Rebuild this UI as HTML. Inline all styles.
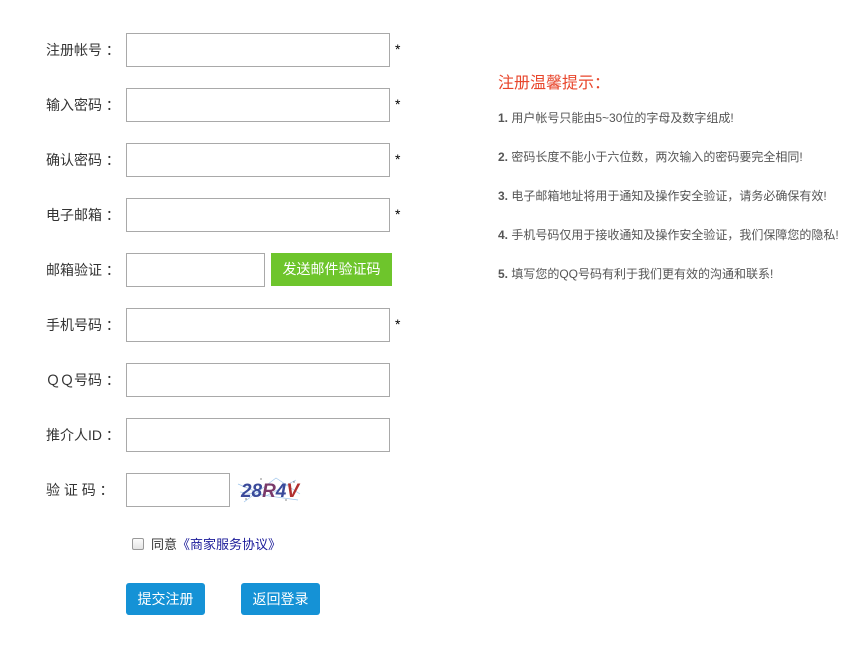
<!DOCTYPE html>
<html><head><meta charset="utf-8"><style>
*{margin:0;padding:0;box-sizing:border-box}
body{width:847px;height:668px;background:#fff;font-family:"Liberation Sans","Noto Sans CJK SC",sans-serif;position:relative;overflow:hidden;color:#333}
.lbl{position:absolute;left:46px;font-size:14px;color:#333;line-height:20px;white-space:pre}
.inp{position:absolute;left:126px;width:264px;height:34px;border:1px solid #a9a9a9;background:#fff}
.star{position:absolute;left:395px;font-size:14px;color:#000}
.btn{position:absolute;top:583px;height:32px;width:79px;background:#1592d6;color:#fff;border-radius:3px;font-size:14px;text-align:center;line-height:32px}
.tip{position:absolute;left:498px;font-size:12px;color:#555;line-height:16px}
.tip b{font-weight:bold;color:#555}
</style></head><body>
<div class="lbl" style="top:40px">注册帐号 ：</div><div class="inp" style="top:33px"></div><div class="star" style="top:41px">*</div>
<div class="lbl" style="top:95px">输入密码 ：</div><div class="inp" style="top:88px"></div><div class="star" style="top:96px">*</div>
<div class="lbl" style="top:150px">确认密码 ：</div><div class="inp" style="top:143px"></div><div class="star" style="top:151px">*</div>
<div class="lbl" style="top:205px">电子邮箱 ：</div><div class="inp" style="top:198px"></div><div class="star" style="top:206px">*</div>
<div class="lbl" style="top:260px">邮箱验证 ：</div><div class="inp" style="top:253px;width:139px"></div>
<div style="position:absolute;left:271px;top:253px;width:121px;height:33px;background:#6ec52c;color:#fff;font-size:14px;text-align:center;line-height:33px">发送邮件验证码</div>
<div class="lbl" style="top:315px">手机号码 ：</div><div class="inp" style="top:308px"></div><div class="star" style="top:316px">*</div>
<div class="lbl" style="top:370px">ＱＱ号码 ：</div><div class="inp" style="top:363px"></div>
<div class="lbl" style="top:425px">推介人ID ：</div><div class="inp" style="top:418px"></div>
<div class="lbl" style="top:480px">验 证 码 ：</div><div class="inp" style="top:473px;width:104px"></div>
<svg style="position:absolute;left:236px;top:474px" width="66" height="32">
<g stroke="#9bc3ea" stroke-width="0.7" fill="none"><path d="M2 10 L30 22 L60 6"/><path d="M8 28 L40 4 L64 20"/><path d="M4 18 L62 26"/></g>
<g fill="#333"><circle cx="10" cy="25" r="0.6"/><circle cx="50" cy="26" r="0.6"/><circle cx="58" cy="8" r="0.6"/><circle cx="25" cy="5" r="0.6"/></g>
<text x="5" y="23" font-family="Liberation Sans" font-style="italic" font-weight="bold" font-size="19" fill="#3a4a9a" textLength="58">28<tspan fill="#7a3a6a">R</tspan><tspan fill="#3a4a9a">4</tspan><tspan fill="#b03030">V</tspan></text>
</svg>
<div style="position:absolute;left:132px;top:538px;width:12px;height:12px;border:1px solid #999;border-radius:2px;background:linear-gradient(#fcfcfc,#e4e4e4)"></div>
<div style="position:absolute;left:151px;top:536px;font-size:13px;line-height:18px;color:#333">同意<span style="color:#1a1a99">《商家服务协议》</span></div>
<div class="btn" style="left:126px">提交注册</div>
<div class="btn" style="left:241px">返回登录</div>
<div style="position:absolute;left:498px;top:74px;font-size:16px;color:#e8462c;line-height:20px">注册温馨提示：</div>
<div class="tip" style="top:110px"><b>1.</b> 用户帐号只能由5~30位的字母及数字组成!</div>
<div class="tip" style="top:149px"><b>2.</b> 密码长度不能小于六位数，两次输入的密码要完全相同!</div>
<div class="tip" style="top:188px"><b>3.</b> 电子邮箱地址将用于通知及操作安全验证，请务必确保有效!</div>
<div class="tip" style="top:227px"><b>4.</b> 手机号码仅用于接收通知及操作安全验证，我们保障您的隐私!</div>
<div class="tip" style="top:266px"><b>5.</b> 填写您的QQ号码有利于我们更有效的沟通和联系!</div>
</body></html>
